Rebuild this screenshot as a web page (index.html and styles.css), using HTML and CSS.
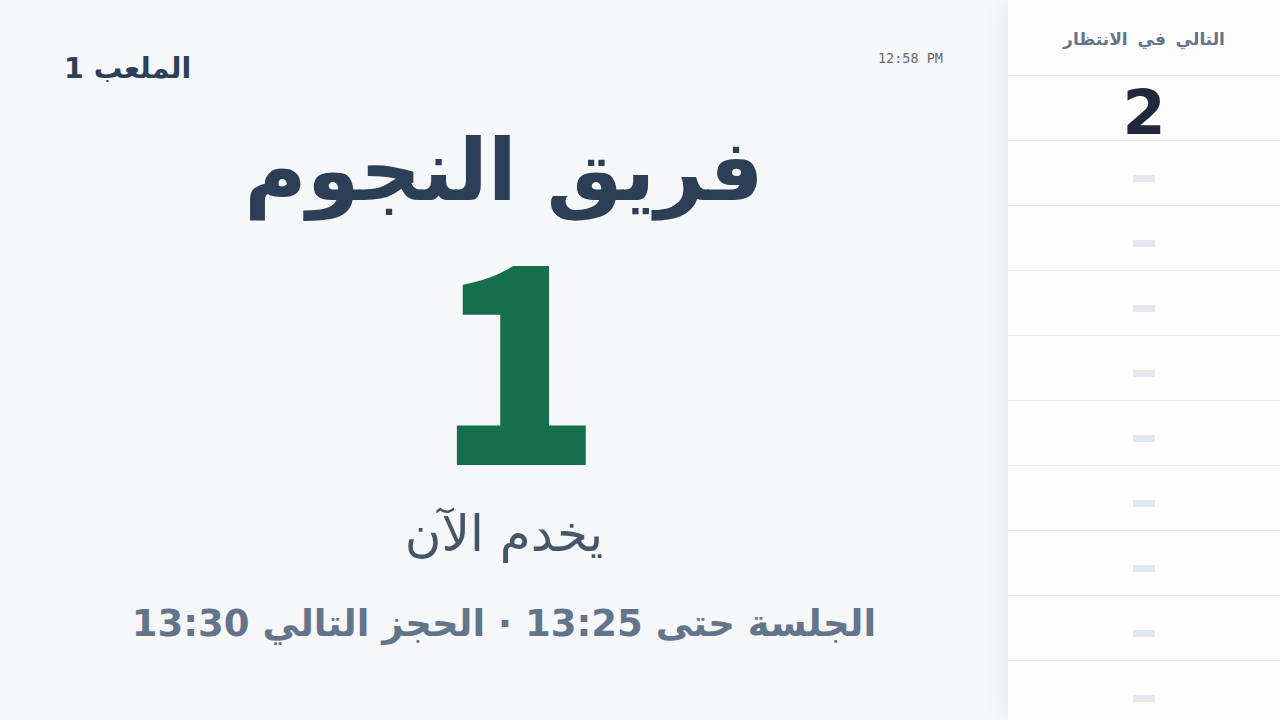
FILE: index.html
```html
<!DOCTYPE html>
<html lang="ar">
<head>
<meta charset="utf-8">
<link rel="stylesheet" href="styles.css">
</head>
<body>
<div class="screen">
  <main class="main">
    <header class="top">
      <div class="court" dir="rtl">الملعب 1</div>
      <div class="clock">12:58 PM</div>
    </header>
    <section class="now">
      <div class="team" dir="rtl">فريق النجوم</div>
      <div class="number">1</div>
      <div class="status" dir="rtl">يخدم الآن</div>
      <div class="session" dir="rtl">الجلسة حتى 13:25 · الحجز التالي 13:30</div>
    </section>
  </main>
  <aside class="side">
    <div class="side-head" dir="rtl">التالي في الانتظار</div>
    <ul class="queue">
      <li class="row"><span class="qnum">2</span></li>
      <li class="row"><span class="dash"></span></li>
      <li class="row"><span class="dash"></span></li>
      <li class="row"><span class="dash"></span></li>
      <li class="row"><span class="dash"></span></li>
      <li class="row"><span class="dash"></span></li>
      <li class="row"><span class="dash"></span></li>
      <li class="row"><span class="dash"></span></li>
      <li class="row"><span class="dash"></span></li>
      <li class="row"><span class="dash"></span></li>
    </ul>
  </aside>
</div>
</body>
</html>
```

FILE: styles.css
```css
* { box-sizing: border-box; }
html, body { margin: 0; padding: 0; }
body {
  font-family: "DejaVu Sans", sans-serif;
  background: #f5f7f8;
  width: 1280px;
  height: 720px;
  overflow: hidden;
}
.screen {
  display: flex;
  height: 720px;
}
.main {
  flex: 1;
  padding: 44px 64px 0;
  display: flex;
  flex-direction: column;
}
.top {
  display: flex;
  justify-content: space-between;
  align-items: center;
  height: 48px;
}
.clock {
  font-family: "DejaVu Sans Mono", monospace;
  font-size: 13.5px;
  color: #6b6b6b;
  align-self: flex-start;
  margin-top: 6px;
  margin-right: 1px;
}
.court {
  font-size: 28.5px;
  font-weight: bold;
  color: #2d3f57;
}
.now {
  display: flex;
  flex-direction: column;
  align-items: center;
}
.team {
  font-size: 85px;
  font-weight: bold;
  color: #2d3f57;
  line-height: 1;
  margin-top: 36px;
}
.number {
  font-family: "Noto Sans CJK SC", "DejaVu Sans", sans-serif;
  font-size: 274px;
  font-weight: 900;
  color: #14704a;
  line-height: 218px;
  height: 218px;
  margin-top: 24px;
  margin-left: 30px;
}
.status {
  font-size: 50px;
  color: #475569;
  line-height: 1;
  margin-top: 54px;
}
.session {
  font-size: 37px;
  font-weight: bold;
  color: #64748b;
  line-height: 1;
  margin-top: 46px;
}
.side {
  width: 272px;
  background: #fdfdfd;
  box-shadow: 0 0 24px rgba(0, 0, 0, 0.07);
  display: flex;
  flex-direction: column;
}
.side-head {
  flex-shrink: 0;
  height: 76px;
  display: flex;
  align-items: center;
  justify-content: center;
  font-size: 17px;
  font-weight: bold;
  color: #64748b;
  word-spacing: 4px;
  border-bottom: 1px solid #e5e7eb;
  padding-top: 2px;
}
.queue {
  list-style: none;
  margin: 0;
  padding: 0;
}
.row {
  height: 65px;
  border-bottom: 1px solid #e5e7eb;
  display: flex;
  align-items: center;
  justify-content: center;
}
.qnum {
  font-size: 62px;
  font-weight: bold;
  color: #1e293b;
  line-height: 1;
  margin-top: 10px;
}
.dash {
  display: block;
  width: 22px;
  height: 7px;
  background: #e5e7ee;
  margin-top: 11px;
}
```
